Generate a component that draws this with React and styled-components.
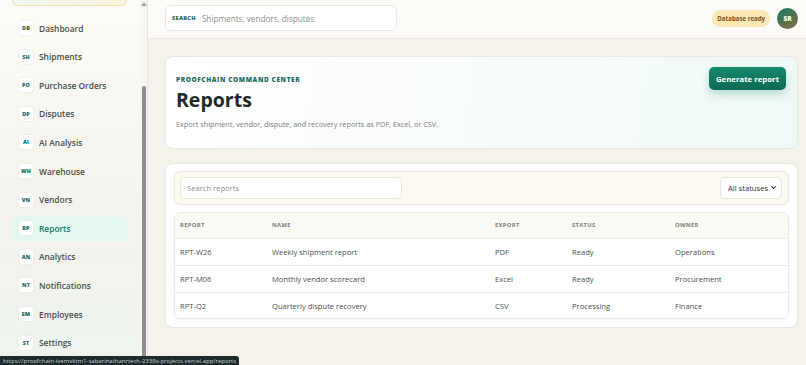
import React from "react";
import styled, { createGlobalStyle } from "styled-components";

const GlobalStyle = createGlobalStyle`
  html, body {
    margin: 0;
    padding: 0;
    height: 100%;
    overflow: hidden;
  }
  body {
    font-family: "Open Sans", "Noto Sans", sans-serif;
    background: #f5f2ec;
  }
`;

const Shell = styled.div`
  display: flex;
  height: 100vh;
  width: 100vw;
`;

const Sidebar = styled.aside`
  width: 148px;
  flex-shrink: 0;
  display: flex;
  background: linear-gradient(180deg, #fcfbf6 0%, #f4f2ec 60%, #edf4ee 100%);
  border-right: 1px solid #e9e5dc;
  box-sizing: border-box;
`;

const NavCol = styled.nav`
  flex: 1;
  padding: 0 13px 0 12px;
  display: flex;
  flex-direction: column;
  gap: 3.6px;
`;

const BrandStub = styled.div`
  height: 5px;
  margin-bottom: 6px;
  border: 1px solid #efe3b8;
  border-top: none;
  border-radius: 0 0 6px 6px;
  background: linear-gradient(90deg, #f1f8ee, #fbf4df);
`;

const NavItem = styled.div`
  height: 25px;
  display: flex;
  align-items: center;
  padding-left: 7px;
  border-radius: 6px;
  background: ${(p) => (p.$active ? "#e4f8f0" : "transparent")};
`;

const Badge = styled.span`
  width: 14px;
  height: 14px;
  border-radius: 3px;
  background: #ffffff;
  box-shadow: 0 0 0 0.5px #ece8df;
  display: flex;
  align-items: center;
  justify-content: center;
  font-size: 5.4px;
  font-weight: 800;
  color: #1d6b59;
  letter-spacing: 0.1px;
`;

const NavLabel = styled.span`
  margin-left: 6px;
  font-size: 8.4px;
  font-weight: 600;
  color: ${(p) => (p.$active ? "#177a62" : "#46524d")};
`;

const ScrollTrack = styled.div`
  width: 7px;
  display: flex;
  flex-direction: column;
  align-items: center;
  background: #f7f6f2;
`;

const ScrollArrow = styled.div`
  width: 0;
  height: 0;
  margin-top: 2px;
  border-left: 3px solid transparent;
  border-right: 3px solid transparent;
  border-bottom: 4px solid #a3a3a3;
`;

const ScrollThumb = styled.div`
  width: 4px;
  margin-top: 80px;
  flex: 1;
  background: #8d8d8d;
  border-radius: 2px 2px 0 0;
`;

const Main = styled.main`
  flex: 1;
  display: flex;
  flex-direction: column;
  min-width: 0;
`;

const Topbar = styled.header`
  height: 39px;
  box-sizing: border-box;
  display: flex;
  align-items: center;
  justify-content: space-between;
  padding: 0 8px 2px 17px;
  background: #fcfbf7;
  border-bottom: 1px solid #ede9e0;
`;

const GlobalSearch = styled.div`
  width: 232px;
  height: 26px;
  box-sizing: border-box;
  display: flex;
  align-items: center;
  gap: 6px;
  padding: 0 6px;
  background: #ffffff;
  border: 1px solid #ebe7de;
  border-radius: 6px;
`;

const SearchTag = styled.span`
  font-size: 5.6px;
  font-weight: 800;
  letter-spacing: 0.3px;
  color: #1d6b59;
`;

const SearchHint = styled.span`
  font-size: 8.2px;
  color: #8c8f8b;
`;

const TopRight = styled.div`
  display: flex;
  align-items: center;
  gap: 7px;
`;

const StatusPill = styled.span`
  height: 17px;
  padding: 0 5px;
  display: flex;
  align-items: center;
  border-radius: 9px;
  background: #fbe8b6;
  color: #7d5217;
  font-size: 6.1px;
  font-weight: 700;
`;

const Avatar = styled.span`
  width: 21px;
  height: 21px;
  border-radius: 50%;
  background: linear-gradient(150deg, #1f7a62 10%, #8c6a3e 100%);
  color: #ffffff;
  font-size: 6.4px;
  font-weight: 800;
  display: flex;
  align-items: center;
  justify-content: center;
`;

const Content = styled.div`
  padding: 17px 8px 0 17px;
  display: flex;
  flex-direction: column;
  gap: 14px;
`;

const Hero = styled.section`
  height: 93px;
  box-sizing: border-box;
  display: flex;
  justify-content: space-between;
  align-items: flex-start;
  padding: 10px 11px 0 10px;
  border: 1px solid #ece9e1;
  border-radius: 8px;
  background: linear-gradient(100deg, #ffffff 0%, #f7fbf9 50%, #effaf7 100%);
`;

const HeroText = styled.div`
  padding-top: 8px;
  display: flex;
  flex-direction: column;
`;

const Eyebrow = styled.span`
  font-size: 6.5px;
  font-weight: 800;
  letter-spacing: 0.6px;
  color: #1d6b59;
`;

const Title = styled.h1`
  margin: 3px 0 0;
  font-size: 19.5px;
  line-height: 26px;
  font-weight: 700;
  color: #1f2a27;
`;

const Subtitle = styled.p`
  margin: 6px 0 0;
  font-size: 7.3px;
  color: #7d807d;
`;

const PrimaryButton = styled.button`
  width: 77px;
  height: 23px;
  padding: 0;
  border: none;
  border-radius: 5px;
  background: linear-gradient(180deg, #16896d, #0c6a55);
  color: #ffffff;
  font-family: inherit;
  font-size: 7.8px;
  font-weight: 700;
  white-space: nowrap;
  box-shadow: 0 4px 8px rgba(15, 110, 88, 0.25);
  cursor: pointer;
`;

const TableCard = styled.section`
  height: 165px;
  box-sizing: border-box;
  padding: 7px 8px 8px;
  display: flex;
  flex-direction: column;
  gap: 7px;
  background: #ffffff;
  border: 1px solid #ece9e1;
  border-radius: 8px;
`;

const FilterBar = styled.div`
  height: 34px;
  box-sizing: border-box;
  display: flex;
  align-items: center;
  justify-content: space-between;
  padding: 0 6px 0 5px;
  background: #fcf9f1;
  border: 1px solid #efeadf;
  border-radius: 6px;
`;

const FilterInput = styled.div`
  width: 222px;
  height: 22px;
  box-sizing: border-box;
  display: flex;
  align-items: center;
  padding: 0 6px;
  background: #ffffff;
  border: 1px solid #ebe7de;
  border-radius: 5px;
  font-size: 7.6px;
  color: #8c8f8b;
`;

const Select = styled.div`
  width: 62px;
  height: 22px;
  box-sizing: border-box;
  display: flex;
  align-items: center;
  justify-content: space-between;
  padding: 0 4px 0 7px;
  background: #ffffff;
  border: 1px solid #ebe7de;
  border-radius: 5px;
  font-size: 7.6px;
  color: #2b302e;
`;

const Table = styled.div`
  border: 1px solid #ece9e1;
  border-radius: 6px;
  overflow: hidden;
  box-shadow: 0 1px 2px rgba(0, 0, 0, 0.04);
`;

const Row = styled.div`
  display: grid;
  grid-template-columns: 92px 223px 77px 103px 1fr;
  align-items: center;
  padding-left: 5px;
  height: ${(p) => (p.$head ? "25px" : "27px")};
  background: ${(p) => (p.$head ? "#fbf9f3" : "#ffffff")};
  border-top: ${(p) => (p.$head ? "none" : "1px solid #eeebe4")};
  box-sizing: border-box;
`;

const HeadCell = styled.span`
  font-size: 5.8px;
  font-weight: 700;
  letter-spacing: 0.35px;
  color: #7b7d77;
`;

const Cell = styled.span`
  font-size: 7.6px;
  color: #4a4f4c;
`;

const UrlHint = styled.div`
  position: fixed;
  left: 0;
  bottom: 0;
  height: 9px;
  padding: 0 3px;
  display: flex;
  align-items: center;
  background: #1e2b2d;
  color: #c3cfcf;
  font-size: 6px;
  border-radius: 0 3px 0 0;
`;

const navItems = [
  ["DB", "Dashboard"],
  ["SH", "Shipments"],
  ["PO", "Purchase Orders"],
  ["DP", "Disputes"],
  ["AI", "AI Analysis"],
  ["WH", "Warehouse"],
  ["VN", "Vendors"],
  ["RP", "Reports"],
  ["AN", "Analytics"],
  ["NT", "Notifications"],
  ["EM", "Employees"],
  ["ST", "Settings"],
];

const reports = [
  ["RPT-W26", "Weekly shipment report", "PDF", "Ready", "Operations"],
  ["RPT-M06", "Monthly vendor scorecard", "Excel", "Ready", "Procurement"],
  ["RPT-Q2", "Quarterly dispute recovery", "CSV", "Processing", "Finance"],
];

export default function App() {
  return (
    <>
      <GlobalStyle />
      <Shell>
        <Sidebar>
          <NavCol>
            <BrandStub />
            {navItems.map(([code, label]) => {
              const active = label === "Reports";
              return (
                <NavItem key={code} $active={active}>
                  <Badge>{code}</Badge>
                  <NavLabel $active={active}>{label}</NavLabel>
                </NavItem>
              );
            })}
          </NavCol>
          <ScrollTrack>
            <ScrollArrow />
            <ScrollThumb />
          </ScrollTrack>
        </Sidebar>
        <Main>
          <Topbar>
            <GlobalSearch>
              <SearchTag>SEARCH</SearchTag>
              <SearchHint>Shipments, vendors, disputes</SearchHint>
            </GlobalSearch>
            <TopRight>
              <StatusPill>Database ready</StatusPill>
              <Avatar>SR</Avatar>
            </TopRight>
          </Topbar>
          <Content>
            <Hero>
              <HeroText>
                <Eyebrow>PROOFCHAIN COMMAND CENTER</Eyebrow>
                <Title>Reports</Title>
                <Subtitle>
                  Export shipment, vendor, dispute, and recovery reports as PDF, Excel, or CSV.
                </Subtitle>
              </HeroText>
              <PrimaryButton>Generate report</PrimaryButton>
            </Hero>
            <TableCard>
              <FilterBar>
                <FilterInput>Search reports</FilterInput>
                <Select>
                  All statuses
                  <svg width="7" height="7" viewBox="0 0 10 10">
                    <path d="M2 3.5 L5 6.5 L8 3.5" fill="none" stroke="#2b302e" strokeWidth="1.6" />
                  </svg>
                </Select>
              </FilterBar>
              <Table>
                <Row $head>
                  <HeadCell>REPORT</HeadCell>
                  <HeadCell>NAME</HeadCell>
                  <HeadCell>EXPORT</HeadCell>
                  <HeadCell>STATUS</HeadCell>
                  <HeadCell>OWNER</HeadCell>
                </Row>
                {reports.map((r) => (
                  <Row key={r[0]}>
                    {r.map((v) => (
                      <Cell key={v}>{v}</Cell>
                    ))}
                  </Row>
                ))}
              </Table>
            </TableCard>
          </Content>
        </Main>
      </Shell>
      <UrlHint>https://proofchain-ivemvktm1-sabarinathanrtech-2338s-projects.vercel.app/reports</UrlHint>
    </>
  );
}
